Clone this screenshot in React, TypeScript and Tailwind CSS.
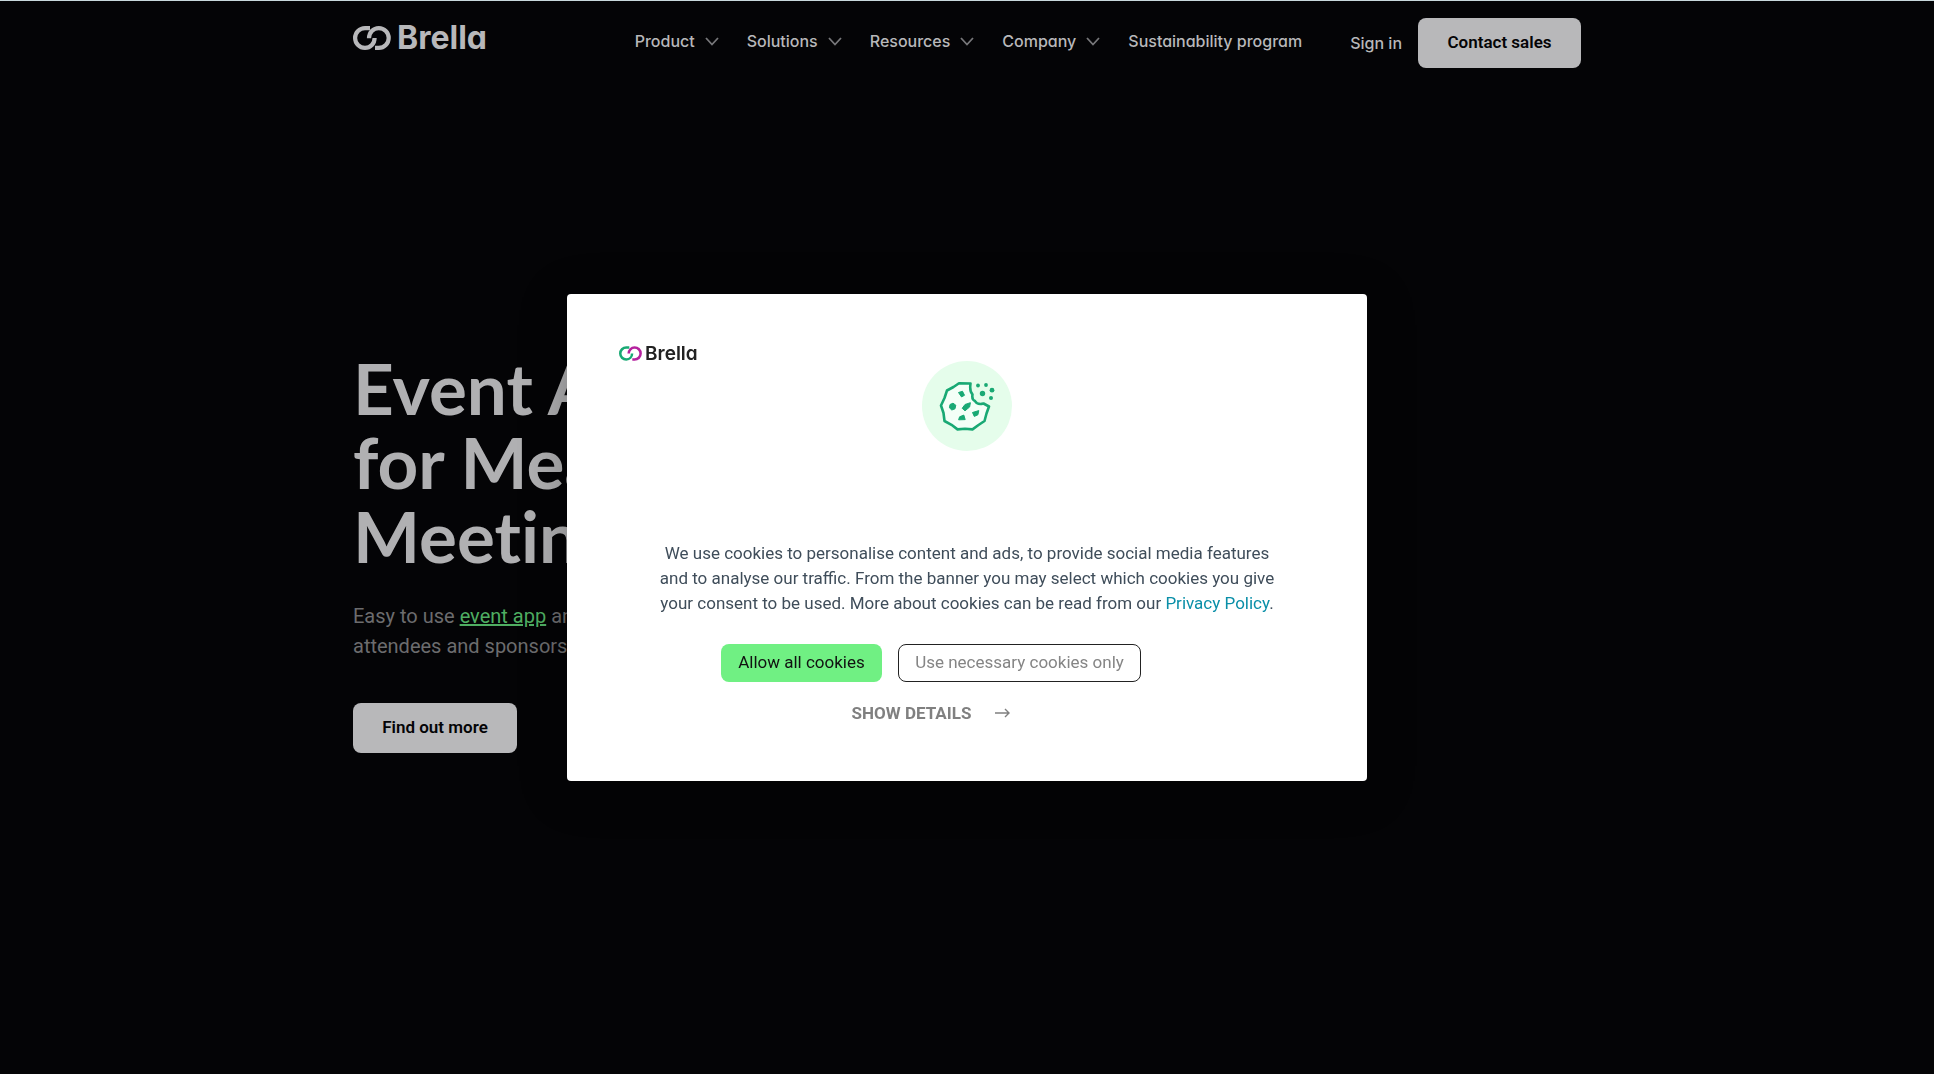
import React from "react";

const display = "font-['Inter','Lato',sans-serif] [font-feature-settings:'cv11'] font-medium";

function LinkMark({ className, left, right }: { className: string; left: string; right: string }) {
  return (
    <svg viewBox="0 0 38 24" className={className} fill="none" strokeWidth="4.2" aria-hidden="true">
      <path d="M17 2.1H12A9.9 9.9 0 1 0 12 21.9C17.5 21.9 21.6 17.5 21.6 12" stroke={left} />
      <path d="M16 12.2C16 6.5 20.3 2.1 25.8 2.1A9.9 9.9 0 1 1 25.8 21.9H22" stroke={right} />
    </svg>
  );
}

function Chevron() {
  return (
    <svg viewBox="0 0 14 9" className="h-[9px] w-[14px]" fill="none" stroke="#77777a" strokeWidth="1.8" aria-hidden="true">
      <path d="M1 1l6 6.5L13 1" />
    </svg>
  );
}

function Cookie() {
  return (
    <svg viewBox="0 0 90 90" className="size-[90px]" role="img" aria-label="Cookie">
      <circle cx="45" cy="45" r="45" fill="#e5fdeb" />
      <path
        d="M48.5 22.5L37 22.2L31.5 26L25 29.5L22.5 37L19 44.5L21.5 52L22.5 60L29.5 63.8L35.5 68.4L43 67.8L50.5 68.4L56.5 64L62.5 60L64.5 52.5L67 45.5L61.5 42.5C58 43.5 54.5 42.8 53 40C50 39 50 36.5 50.5 33.5C47.5 30.5 48 26 48.5 22.5Z"
        fill="#f4fff7"
        stroke="#19a974"
        strokeWidth="2.6"
        strokeLinejoin="round"
      />
      <g fill="#19a974" stroke="#19a974" strokeWidth="1" strokeLinejoin="round">
        <path d="M36.5 31.5l4-1.2 2 4-3 1.6z" />
        <path d="M28 43.5l3-1.3 2.8 2-.8 3.6-3.2 1.2-2.4-2.2z" />
        <path d="M43 43.5l5.4-1.8-.8 4.3-4.6 3.8-2.8-2.5z" />
        <path d="M50.5 51.5l6.3-1.9-.9 4.2-3.6 1.6z" />
        <path d="M37.6 55.8l4.2-1.7 1.4 4.5-6.6.2z" />
      </g>
      <g fill="#19a974">
        <circle cx="56" cy="24.5" r="1.9" />
        <circle cx="64" cy="24" r="1.9" />
        <circle cx="70" cy="29.2" r="2.4" />
        <circle cx="60.5" cy="32.5" r="2.7" />
        <circle cx="69" cy="37" r="2" />
      </g>
    </svg>
  );
}

function Header() {
  return (
    <header className="mx-auto flex w-full max-w-[1228px] items-start pt-[17px]">
      <a href="#home" aria-label="Brella home" className="mt-2 flex items-center gap-[6px] text-[#b8b8ba]">
        <LinkMark className="h-6 w-[38px]" left="#b8b8ba" right="#b8b8ba" />
        <span className="font-['Inter',sans-serif] text-[32px] leading-6 font-bold [font-feature-settings:'cv11']">
          Brella
        </span>
      </a>
      <nav className={`ml-auto flex h-[46px] items-center gap-7 text-base text-[#b8b8ba] ${display}`}>
        {["Product", "Solutions", "Resources", "Company"].map((label) => (
          <button key={label} type="button" className="flex items-center gap-[10px]">
            {label}
            <Chevron />
          </button>
        ))}
        <a href="#sustainability">Sustainability program</a>
      </nav>
      <a href="#signin" className={`ml-12 text-base leading-[50px] text-[#b8b8ba] ${display}`}>
        Sign in
      </a>
      <button
        type="button"
        className="ml-4 h-[50px] w-[163px] rounded-lg bg-[#b8b8ba] font-['Roboto',sans-serif] text-[17px] font-semibold text-[#040406]"
      >
        Contact sales
      </button>
    </header>
  );
}

function Hero() {
  return (
    <section className="mx-auto w-full max-w-[1228px] pt-[283px]">
      <h1 className="font-['Lato',sans-serif] text-[71px] leading-[74px] font-bold text-[#b0b0b2] [font-variant-ligatures:none]">
        Event App
        <br />
        for Meaningful
        <br />
        Meetings
      </h1>
      <p className="mt-7 font-['Roboto',sans-serif] text-xl leading-[30px] text-[#6c6c6e]">
        Easy to use{" "}
        <a href="#event-app" className="text-[#4fae62] underline">
          event app
        </a>{" "}
        and
        <br />
        attendees and sponsors
      </p>
      <button
        type="button"
        className="mt-[42px] h-[50px] w-[164px] rounded-lg bg-[#b8b8ba] font-['Roboto',sans-serif] text-[17px] font-semibold text-[#040406]"
      >
        Find out more
      </button>
    </section>
  );
}

function CookieDialog() {
  return (
    <div className="fixed inset-0 flex items-center justify-center">
      <div
        role="dialog"
        aria-modal="true"
        aria-label="Cookie consent"
        className="relative flex w-[800px] max-w-full flex-col items-center rounded-[4px] bg-white pt-[67px] pb-14 font-['Roboto',sans-serif] shadow-[0_8px_48px_rgba(0,0,0,0.3)]"
      >
        <div className="absolute top-[52px] left-[52px] flex items-center gap-[3px]">
          <LinkMark className="h-[15px] w-[23px]" left="#19a974" right="#b5219e" />
          <span className="font-['Inter',sans-serif] text-[19px] leading-4 font-semibold text-[#222] [font-feature-settings:'cv11']">
            Brella
          </span>
        </div>
        <Cookie />
        <p className="mt-[90px] text-center text-[17px] leading-[25px] text-[#3f4d5a]">
          We use cookies to personalise content and ads, to provide social media features
          <br />
          and to analyse our traffic. From the banner you may select which cookies you give
          <br />
          your consent to be used. More about cookies can be read from our{" "}
          <a href="#privacy" className="text-[#0a8fa8]">
            Privacy Policy
          </a>
          .
        </p>
        <div className="mt-7 flex w-full flex-col items-center gap-[19px] pr-[72px]">
          <div className="flex gap-4">
            <button type="button" className="h-[38px] w-[161px] rounded-lg bg-[#70f083] text-[17px] text-[#111]">
              Allow all cookies
            </button>
            <button
              type="button"
              className="h-[38px] w-[243px] rounded-lg border border-[#222] text-[17px] text-[#858585]"
            >
              Use necessary cookies only
            </button>
          </div>
          <button type="button" className="flex items-center gap-6 text-[17px] leading-6 font-bold text-[#808080]">
            SHOW DETAILS
            <svg viewBox="0 0 15 10" className="h-[10px] w-[15px]" fill="none" stroke="#808080" strokeWidth="1.4" aria-hidden="true">
              <path d="M0 5h14M10 1l4 4-4 4" />
            </svg>
          </button>
        </div>
      </div>
    </div>
  );
}

export default function App() {
  return (
    <div className="min-h-screen overflow-hidden border-t border-[#c8d8dc] bg-[#040406]">
      <Header />
      <Hero />
      <CookieDialog />
    </div>
  );
}
